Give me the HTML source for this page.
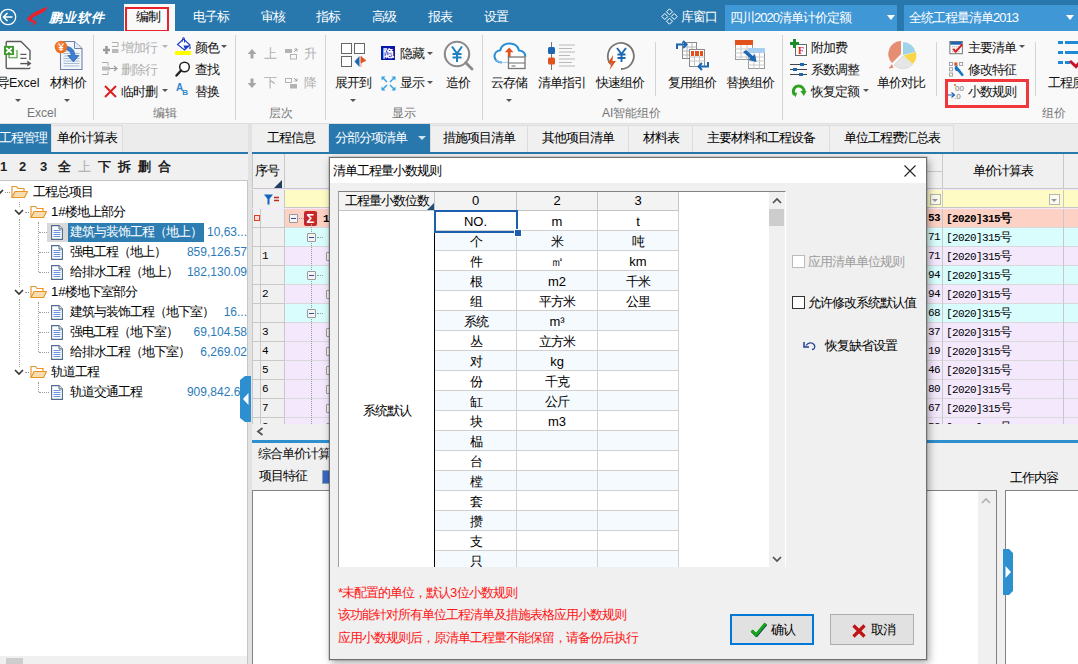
<!DOCTYPE html>
<html lang="zh">
<head>
<meta charset="utf-8">
<title>清单工程量小数规则</title>
<style>
*{box-sizing:border-box;margin:0;padding:0}
html,body{width:1078px;height:664px;overflow:hidden;background:#f0f0f0;font-family:"Liberation Sans",sans-serif;font-size:12px;color:#000}
.abs{position:absolute}
#app{position:relative;width:1078px;height:664px;overflow:hidden;background:#f0f0f0}
/* title bar */
#titlebar{position:absolute;left:0;top:0;width:1078px;height:31px;background:#2878ae}
#titlebar .m{position:absolute;top:8px;color:#fff;letter-spacing:-1px;font-size:13px;line-height:18px;white-space:nowrap}
#tabsel{position:absolute;left:124px;top:4px;width:51px;height:27px;background:#f9f9f9}
#tabred{position:absolute;left:125px;top:7px;width:44px;height:25px;border:2px solid #e8212b}
.combo{position:absolute;top:5px;height:26px;background:#3f97d6;color:#fff;font-size:13px;letter-spacing:-1px;line-height:25px;padding-left:5px;white-space:nowrap;overflow:hidden}
/* ribbon */
#ribbon{position:absolute;left:0;top:31px;width:1078px;height:93px;background:#f9f9f9;border-bottom:1px solid #dedede}
.rsep{position:absolute;top:4px;width:1px;height:85px;background:#d4d4d4}
.rt{position:absolute;letter-spacing:-1px;font-size:13px;line-height:16px;white-space:nowrap;color:#111}
.rt.dis{color:#b0b0b0}
.glabel{position:absolute;top:74px;font-size:12px;line-height:16px;color:#767676;white-space:nowrap}
.dda{position:absolute;width:0;height:0;border-left:3px solid transparent;border-right:3px solid transparent;border-top:3px solid #555}
.dda.l{border-top-color:#b5b5b5}
.dd{display:inline-block;width:0;height:0;border-left:3px solid transparent;border-right:3px solid transparent;border-top:3px solid #555;vertical-align:middle;margin-left:3px}

/* tabs */
.tab{position:absolute;top:125px;height:27px;line-height:23px;font-size:13px;letter-spacing:-1px;text-align:center;white-space:nowrap;background:#f0f0f0;border:1px solid #dcdcdc;border-bottom:none;color:#000}
.tab.sel{background:#2878ae;color:#fff;border-color:#2878ae;top:124px;height:28px;line-height:25px}
.bline{position:absolute;height:2px;background:#2878ae}
/* left tree */
#left{position:absolute;left:0;top:154px;width:248px;height:27px;background:#f0f0f0;border-bottom:1px solid #c6c6c6}
#leftw{position:absolute;left:0;top:181px;width:248px;height:483px;background:#fff;border-right:1px solid #c6c6c6}
.tr{position:absolute;left:0;width:248px;height:20px;line-height:20px;font-size:13px;letter-spacing:-1px;white-space:nowrap}
.tr .amt{position:absolute;right:1px;top:0;color:#2b7bb9;font-size:12px;letter-spacing:0}
.tr .tx{position:absolute;top:0}
.ic{position:absolute}
.vdot{position:absolute;width:0;border-left:1px dotted #9a9a9a}
.hdot{position:absolute;height:0;border-top:1px dotted #9a9a9a}
/* grid */
#grid{position:absolute;left:252px;top:154px;width:826px;height:270px;background:#f4e8fd;overflow:hidden}
.gr{position:absolute;left:0;width:826px;height:19px;border-bottom:1px solid #d9d9d9}
.gc{position:absolute;top:0;height:19px;border-right:1px solid #c8c8c8}
.mono{font-family:"Liberation Mono",monospace;font-size:11px;line-height:18px;white-space:nowrap;position:absolute;letter-spacing:-.6px}

/* dialog */
#dlg{position:absolute;left:329px;top:157px;width:598px;height:503px;background:#f0f0f0;border:1px solid #6f6f6f;box-shadow:0 0 0 1px rgba(0,0,0,.10),2px 3px 8px rgba(0,0,0,.35)}
#dlg .title{position:absolute;left:0;top:0;width:596px;height:25px;background:#fff;font-size:13px;letter-spacing:-1px;line-height:25px;padding-left:3px}
#dg{position:absolute;left:8px;top:33px;width:448px;height:376px;background:#fff;border:1px solid #a0a0a0;border-top-color:#828282;border-right-color:#fff;border-bottom:none;overflow:hidden}
.dh{position:absolute;top:0;height:19px;background:#f3f3f3;border-right:1px solid #c4c4c4;border-bottom:1px solid #c4c4c4;text-align:center;font-size:13px;letter-spacing:-1px;line-height:18px;white-space:nowrap}
.dc{position:absolute;height:20px;border-right:1px solid #d0d0d0;border-bottom:1px solid #d0d0d0;text-align:center;font-size:13px;letter-spacing:-1px;line-height:21px;white-space:nowrap}
.red{position:absolute;left:8px;color:#ff1515;font-size:13px;letter-spacing:-1px;line-height:16px;white-space:nowrap}
.btn{position:absolute;top:456px;width:83px;height:31px;background:#e1e1e1;border:1px solid #adadad;font-size:13px;letter-spacing:-1px;line-height:29px}
.cb{position:absolute;width:13px;height:13px;background:#fff;border:1px solid #333}
</style>
</head>
<body>
<div id="app">

<!-- TITLE BAR -->
<div id="titlebar">
  <svg class="abs" style="left:-1px;top:8px" width="18" height="18" viewBox="0 0 18 18"><circle cx="9" cy="9" r="7.700" fill="none" stroke="#fff" stroke-width="1.300"/><path d="M13.500 9H5M8.500 5L4.500 9l4 4" fill="none" stroke="#fff" stroke-width="1.600"/></svg>
  <svg class="abs" style="left:25px;top:6px" width="24" height="20" viewBox="0 0 24 20"><path d="M23 .8C17.500 2.200 9 6 4 10.500c-2.500 2.300-2.200 4 .3 4.800l4.200 1.200c.8.300.5 1-.5 1.300l-3.500 1c3.500.2 6.500-.5 7-2 .4-1.200-1-2-3.500-2.800C6.500 13.500 6.500 12.500 8 11.500c2.500-1.800 6-3 9-4.500 2.500-1.500 4.500-3.800 6-6.200z" fill="#e8212b"/></svg>
  <div class="m" style="left:49px;top:8px;font-size:13px;font-style:italic;font-weight:bold;letter-spacing:1px;line-height:20px">鹏业软件</div>
  <div id="tabsel"></div>
  <div id="tabred"></div>
  <div class="m" style="left:136px;color:#000">编制</div>
  <div class="m" style="left:193px">电子标</div>
  <div class="m" style="left:261px">审核</div>
  <div class="m" style="left:316px">指标</div>
  <div class="m" style="left:372px">高级</div>
  <div class="m" style="left:428px">报表</div>
  <div class="m" style="left:484px">设置</div>
  <svg class="abs" style="left:661px;top:8px" width="17" height="17" viewBox="0 0 17 17"><g fill="none" stroke="#fff" stroke-width="1"><path d="M8.500 .8l3 3-3 3-3-3zM8.500 10.200l3 3-3 3-3-3zM3.800 5.500l3 3-3 3-3-3zM13.200 5.500l3 3-3 3-3-3z"/></g></svg>
  <div class="m" style="left:681px">库窗口</div>
  <div class="combo" style="left:725px;width:172px">四川2020清单计价定额<span class="dda" style="left:162px;top:10px;border-top-color:#fff;border-left-width:4px;border-right-width:4px;border-top-width:5px"></span></div>
  <div class="combo" style="left:904px;width:174px">全统工程量清单2013<span class="dda" style="left:162px;top:10px;border-top-color:#fff;border-left-width:4px;border-right-width:4px;border-top-width:5px"></span></div>
</div>

<!-- RIBBON -->
<div id="ribbon">
  <!-- group: Excel -->
  <svg class="abs" style="left:3px;top:9px" width="30" height="30" viewBox="0 0 30 30"><path d="M4.200 1.500H18L27 10.500V27.500Q27 28.500 26 28.500H4.200Q3.200 28.500 3.200 27.500V2.500Q3.200 1.500 4.200 1.500Z" fill="#fdfdfd" stroke="#5c5c5c" stroke-width="1.400"/><path d="M17.300 14.300h6.200M17.300 18.300h6.200" stroke="#5c5c5c" stroke-width="1.200"/><path d="M14 10v7.700H6V15" fill="none" stroke="#3c9a2a" stroke-width="1.100"/><rect x="1" y="5.900" width="10" height="9.100" fill="#3c9a2a"/><path d="M3.200 8l5.600 5M8.800 8l-5.600 5" stroke="#fff" stroke-width="1.700"/><rect x="22" y="20" width="8" height="7.500" fill="#f9f9f9"/><path d="M17.300 23.600h7.500" stroke="#555" stroke-width="1.400"/><path d="M24.300 20.600l4.200 3-4.200 3z" fill="#555"/></svg>
  <div class="rt" style="left:-3px;top:44px;font-size:13px;letter-spacing:-1px">导<span style="letter-spacing:0;font-size:12.500px">Excel</span></div>
  <span class="dda" style="left:15px;top:68px"></span>
  <svg class="abs" style="left:54px;top:9px" width="30" height="31" viewBox="0 0 30 31"><path d="M6.500 1.500H20.500L28 8.500V29.500H6.500Z" fill="#f3f7fc" stroke="#6f83a6" stroke-width="1.100"/><path d="M20.500 1.500V8.500H28" fill="#e3ebf5" stroke="#6f83a6" stroke-width="1"/><path d="M9.500 11h10M9.500 13.500h16M9.500 16h16M9.500 18.500h16M9.500 21h16M9.500 23.500h16M9.500 26h16" stroke="#a9bad2" stroke-width="1"/><path d="M12 6.500c5.500 0 8.500 3.500 9 9h3.800l-5.400 6.400-5.600-6.400h3.500c-.4-3.500-2.300-5.500-5.300-6z" fill="#3b7fd4" stroke="#2a5fa8" stroke-width=".7"/><circle cx="7" cy="7" r="6.300" fill="#ee7023"/><circle cx="6" cy="5.500" r="3.500" fill="#f7965a" opacity=".6"/><path d="M4.500 3.500l2.500 3.500 2.500-3.500M7 7v4M4.800 7.500h4.400M4.800 9.300h4.400" stroke="#fff" stroke-width="1.100" fill="none"/></svg>
  <div class="rt" style="left:50px;top:44px;font-size:13px;letter-spacing:-1px">材料价</div>
  <span class="dda" style="left:64px;top:68px"></span>
  <div class="glabel" style="left:27px">Excel</div>
  <div class="rsep" style="left:93px"></div>

  <!-- group: 编辑 -->
  <svg class="abs" style="left:103px;top:10px" width="16" height="14" viewBox="0 0 16 14"><path d="M3.500 5v8M0 9h7" stroke="#9a9a9a" stroke-width="2.600"/><rect x="9" y="8" width="6.500" height="4" fill="#b9b9b9"/><path d="M9 1.500h6v4h-6" fill="none" stroke="#b0b0b0" stroke-width="1"/></svg>
  <div class="rt dis" style="left:121px;top:9px">增加行</div><span class="dda l" style="left:162px;top:14px"></span>
  <svg class="abs" style="left:101px;top:30px" width="17" height="15" viewBox="0 0 17 15"><path d="M1 1.500h6v3M1 13.500h6v-3" fill="none" stroke="#a8a8a8" stroke-width="1"/><rect x="1" y="5.500" width="8" height="4" fill="#bdbdbd"/><path d="M9 7.500h6M13 5l3 2.500-3 2.500" fill="none" stroke="#9a9a9a" stroke-width="1.200"/></svg>
  <div class="rt dis" style="left:121px;top:31px">删除行</div>
  <svg class="abs" style="left:104px;top:54px" width="13" height="13" viewBox="0 0 13 13"><path d="M1 1l11 11M12 1L1 12" stroke="#e01e1e" stroke-width="2"/></svg>
  <div class="rt" style="left:121px;top:53px">临时删</div><span class="dda" style="left:162px;top:58px"></span>
  <svg class="abs" style="left:175px;top:6px" width="17" height="18" viewBox="0 0 17 18"><path d="M2.500 7.500l6-5.500 6.500 6-5.500 5z" fill="#fff" stroke="#1c3cc4" stroke-width="1.100"/><path d="M8.500 8.500l6 .0-4.500 4z" fill="#1c3cc4"/><path d="M7.500 4.500V1.500c0-1.200 2-1.200 2 0v4" fill="none" stroke="#1c3cc4" stroke-width="1"/><path d="M15 8.500c.8 1.500 1 2.500.5 3.200s-1.500.3-1.300-.7z" fill="#1c3cc4"/><rect x="0" y="14" width="16" height="4" fill="#ffff00"/></svg>
  <div class="rt" style="left:195px;top:9px">颜色</div><span class="dda" style="left:221px;top:14px"></span>
  <svg class="abs" style="left:175px;top:30px" width="16" height="16" viewBox="0 0 16 16"><circle cx="9.500" cy="6" r="4.800" fill="#fff" stroke="#222" stroke-width="1.500"/><path d="M6 9.500L1.500 14.500" stroke="#222" stroke-width="2.400" stroke-linecap="round"/></svg>
  <div class="rt" style="left:195px;top:31px">查找</div>
  <div class="abs" style="left:176px;top:52px;font-size:10px;color:#2f86d0;line-height:10px;font-weight:bold">A<span style="font-size:8px;position:relative;top:4px;left:-1px">B</span></div>
  <div class="rt" style="left:195px;top:53px">替换</div>
  <div class="glabel" style="left:153px">编辑</div>
  <div class="rsep" style="left:235px"></div>

  <!-- group: 层次 -->
  <svg class="abs" style="left:247px;top:18px" width="10" height="10" viewBox="0 0 10 10"><path d="M5 0l4.500 5H6.500v4.500h-3V5H.5z" fill="#a6a6a6"/></svg>
  <div class="rt dis" style="left:264px;top:15px">上</div>
  <svg class="abs" style="left:285px;top:17px" width="14" height="12" viewBox="0 0 14 12"><rect x="0" y="1" width="7" height="4" fill="#b3b3b3"/><rect x="5.500" y="6.500" width="6" height="4.500" fill="none" stroke="#b3b3b3"/><path d="M9 4l3-3M9.500 1H12v2.500" fill="none" stroke="#a0a0a0"/></svg>
  <div class="rt dis" style="left:304px;top:15px">升</div>
  <svg class="abs" style="left:247px;top:47px" width="10" height="10" viewBox="0 0 10 10"><path d="M5 10L.5 5h3V.5h3V5h3z" fill="#a6a6a6"/></svg>
  <div class="rt dis" style="left:264px;top:44px">下</div>
  <svg class="abs" style="left:285px;top:46px" width="14" height="12" viewBox="0 0 14 12"><rect x=".5" y="1.500" width="6" height="4" fill="none" stroke="#b3b3b3"/><rect x="5" y="7" width="7" height="4.500" fill="#b3b3b3"/><path d="M9 1l3 3M12 1.500V4H9.500" fill="none" stroke="#a0a0a0"/></svg>
  <div class="rt dis" style="left:304px;top:44px">降</div>
  <div class="glabel" style="left:269px">层次</div>
  <div class="rsep" style="left:325px"></div>

  <!-- group: 显示 -->
  <svg class="abs" style="left:341px;top:12px" width="26" height="26" viewBox="0 0 26 26"><rect x=".5" y=".5" width="10" height="10" fill="#fff" stroke="#666"/><rect x="13.500" y=".5" width="10" height="10" fill="#fff" stroke="#666"/><rect x=".5" y="13.500" width="10" height="10" fill="#fff" stroke="#666"/><path d="M18.500 13v11l-5-5.500z" fill="#1b67b3"/><path d="M20 13v11M20 13.500l5 4-5 2.500z" fill="#e2521d" stroke="#e2521d" stroke-width=".6"/></svg>
  <div class="rt" style="left:335px;top:44px;font-size:13px;letter-spacing:-1px">展开到</div>
  <span class="dda" style="left:350px;top:68px"></span>
  <div class="abs" style="left:381px;top:15px;width:14px;height:14px;background:#0a16a8;color:#fff;font-size:11px;line-height:14px;text-align:center;font-weight:bold;overflow:hidden">隐</div>
  <div class="rt" style="left:400px;top:15px">隐藏</div><span class="dda" style="left:427px;top:21px"></span>
  <svg class="abs" style="left:381px;top:45px" width="15" height="15" viewBox="0 0 15 15"><g stroke="#35a0e2" stroke-width="1.500" fill="#35a0e2"><path d="M2 2l4 4M13 2l-4 4M2 13l4-4M13 13l-4-4" fill="none"/><path d="M.5 .5h4l-4 4zM14.500 .5h-4l4 4zM.5 14.500h4l-4-4zM14.500 14.500h-4l4-4z" stroke="none"/></g></svg>
  <div class="rt" style="left:400px;top:44px">显示</div><span class="dda" style="left:427px;top:50px"></span>
  <svg class="abs" style="left:443px;top:9px" width="31" height="31" viewBox="0 0 31 31"><circle cx="14" cy="14" r="12.200" fill="#fcfcfc" stroke="#8a8a8a" stroke-width="2.100"/><path d="M22.800 22.800l6.200 6.200" stroke="#8a8a8a" stroke-width="2.800" stroke-linecap="round"/><path d="M9 6.500l5 7 5-7M14 13.500v8.500M9.500 14h9M9.500 17.500h9" fill="none" stroke="#1d80c0" stroke-width="2"/></svg>
  <div class="rt" style="left:446px;top:44px;font-size:13px;letter-spacing:-1px">造价</div>
  <div class="glabel" style="left:392px">显示</div>
  <div class="rsep" style="left:482px"></div>

  <!-- group: AI智能组价 -->
  <svg class="abs" style="left:493px;top:11px" width="34" height="28" viewBox="0 0 34 28"><path d="M9 20.500c-4.500 0-7.500-2.800-7.500-6.200 0-3.300 2.500-5.700 5.800-6.100C8.300 4 12 1.500 16.500 1.500c4.800 0 8.500 2.800 9.500 7 3.800.4 6.300 2.800 6.300 6.200" fill="#fff" stroke="#2b8fd3" stroke-width="2.100"/><path d="M3 18c2 2 4 2.500 12 2.500" fill="none" stroke="#9fcdee" stroke-width="1"/><path d="M16.200 5.500l4.300 4.700h-2.900v6h-2.800v-6h-2.900z" fill="#e2521d"/><rect x="15.500" y="15" width="16.500" height="11.500" fill="#fff" stroke="#777" stroke-width="1.300"/><path d="M15.500 21h16.500" stroke="#777" stroke-width="1.100"/><path d="M18.500 24h4" stroke="#777" stroke-width="1.100"/></svg>
  <div class="rt" style="left:491px;top:44px;font-size:13px;letter-spacing:-1px">云存储</div>
  <span class="dda" style="left:506px;top:68px"></span>
  <svg class="abs" style="left:547px;top:11px" width="30" height="28" viewBox="0 0 30 28"><path d="M4.500 0v28" stroke="#777" stroke-width="1"/><rect x="1" y="5" width="7" height="7" rx="1.500" fill="#1b67b3"/><rect x="1" y="15.500" width="7" height="7" rx="1.500" fill="#e2521d"/><path d="M12 3h16M12 6.500h13M12 10h16M12 13.500h11M12 17h16M12 20.500h13M12 24h16" stroke="#b9b9b9" stroke-width="1"/></svg>
  <div class="rt" style="left:538px;top:44px;font-size:13px;letter-spacing:-1px">清单指引</div>
  <svg class="abs" style="left:605px;top:9px" width="31" height="31" viewBox="0 0 31 31"><path d="M6 24.500A13 13 0 1 1 16 29" fill="#fff" stroke="#777" stroke-width="1.800"/><path d="M12 8l4.500 6 4.500-6M16.500 14v8M12.500 14.500h8M12.500 18h8" fill="none" stroke="#1b67b3" stroke-width="1.900"/><path d="M8 15l-5 8h3.500l-2 7 6.500-9H7.500z" fill="#e2521d"/></svg>
  <div class="rt" style="left:596px;top:44px;font-size:13px;letter-spacing:-1px">快速组价</div>
  <span class="dda" style="left:617px;top:68px"></span>
  <div class="rsep" style="left:655px;top:11px;height:54px"></div>
  <svg class="abs" style="left:676px;top:9px" width="33" height="32" viewBox="0 0 33 32"><rect x="6.500" y="2.500" width="14" height="16" fill="#fff" stroke="#888"/><path d="M6.500 7h14M6.500 11h14M6.500 15h14M11 2.500v16M16 2.500v16" stroke="#b5b5b5" stroke-width="1"/><rect x="13.500" y="9.500" width="15" height="17" fill="#fff" stroke="#888"/><rect x="15" y="11" width="12" height="5" fill="#e2521d"/><path d="M13.500 17h15M13.500 21h15M18.500 11v15.500M23.500 11v15.500" stroke="#c5c5c5" stroke-width="1"/><path d="M18.500 11v5M23.500 11v5" stroke="#fff"/><path d="M1 9V4.500h9M7 1l3.500 3.500L7 8" fill="none" stroke="#1b67b3" stroke-width="2"/><path d="M32 22v4.500h-9M26 23l-3.500 3.500L26 30" fill="none" stroke="#1b67b3" stroke-width="2"/></svg>
  <div class="rt" style="left:668px;top:44px;font-size:13px;letter-spacing:-1px">复用组价</div>
  <svg class="abs" style="left:734px;top:8px" width="33" height="33" viewBox="0 0 33 33"><rect x="1.500" y="1.500" width="17" height="19" fill="#fff" stroke="#999"/><rect x="1" y="1" width="18" height="5" fill="#e2521d"/><path d="M1.500 10h17M1.500 14h17M1.500 18h17M7 6v14.500M13 6v14.500" stroke="#c9c9c9"/><rect x="14.500" y="9.500" width="16" height="20" fill="#fff" stroke="#999"/><rect x="14" y="9" width="17" height="5" fill="#a9d0f0"/><path d="M14.500 18h16M14.500 22h16M14.500 26h16M20 14v15.500M25.500 14v15.500" stroke="#c9c9c9"/><path d="M9 13l7 6-1.500 2 8 2-1.500-8-2 2-7-6z" fill="#1b67b3"/></svg>
  <div class="rt" style="left:726px;top:44px;font-size:13px;letter-spacing:-1px">替换组价</div>
  <div class="glabel" style="left:602px">AI智能组价</div>
  <div class="rsep" style="left:782px"></div>

  <!-- group: 组价 -->
  <svg class="abs" style="left:790px;top:8px" width="18" height="18" viewBox="0 0 18 18"><rect x="5.500" y="5.500" width="11" height="11" fill="#fff" stroke="#666"/><text x="8" y="15" font-family="Liberation Serif" font-weight="bold" font-size="10" fill="#e01e1e">F</text><path d="M4.500 0v9M0 4.500h9" stroke="#1e8a2e" stroke-width="3"/></svg>
  <div class="rt" style="left:811px;top:9px">附加费</div>
  <svg class="abs" style="left:790px;top:31px" width="18" height="15" viewBox="0 0 18 15"><path d="M0 2.500h17M0 7.500h17M0 12.500h17" stroke="#444" stroke-width="1"/><rect x="10" y="1" width="4" height="3" fill="#1b67b3"/><rect x="3" y="6" width="4" height="3" fill="#1b67b3"/><rect x="9" y="11" width="4" height="3" fill="#1b67b3"/></svg>
  <div class="rt" style="left:811px;top:31px">系数调整</div>
  <svg class="abs" style="left:791px;top:53px" width="16" height="15" viewBox="0 0 17 17"><path d="M3.500 12A6 6 0 1 1 14 9.500" fill="none" stroke="#2ea31f" stroke-width="3.400"/><path d="M10 8h7l-3 5.500z" fill="#2ea31f"/><path d="M1 10l3.500 5 2-5z" fill="#2ea31f"/></svg>
  <div class="rt" style="left:811px;top:53px">恢复定额</div><span class="dda" style="left:863px;top:58px"></span>
  <svg class="abs" style="left:886px;top:9px" width="32" height="32" viewBox="0 0 32 32"><path d="M17 15L17 2A13 13 0 0 1 29.500 12z" fill="#9fd3ea"/><path d="M17.500 15.500l12.500-3.500a13 13 0 0 1-3 12z" fill="#f8d648"/><path d="M17 16l9.500 8.500A13 13 0 0 1 8 25z" fill="#e6e6e6" stroke="#c8c8c8" stroke-width=".5"/><path d="M15 14L15 1A13 13 0 0 0 6 23z" fill="#e58e73"/><path d="M6 24l-3.500 4.500 5-.5z" fill="#e58e73"/></svg>
  <div class="rt" style="left:877px;top:44px;font-size:13px;letter-spacing:-1px">单价对比</div>
  <div class="rsep" style="left:936px;top:11px;height:54px"></div>
  <svg class="abs" style="left:949px;top:10px" width="15" height="14" viewBox="0 0 17 17"><rect x=".5" y=".5" width="15" height="15" fill="#fff" stroke="#555"/><rect x="1" y="1" width="14" height="3.500" fill="#1b67b3"/><path d="M3 7h9M3 10h9M3 13h9" stroke="#999" stroke-dasharray="1.500 1"/><path d="M4.500 9.500l3 3.500 8-9" fill="none" stroke="#e01e1e" stroke-width="2.400"/></svg>
  <div class="rt" style="left:968px;top:9px">主要清单</div><span class="dda" style="left:1019px;top:14px"></span>
  <svg class="abs" style="left:949px;top:31px" width="15" height="15" viewBox="0 0 17 17"><g fill="none" stroke="#999"><rect x=".5" y=".5" width="3.500" height="3.500"/><rect x=".5" y="6.500" width="3.500" height="3.500"/><rect x=".5" y="12.500" width="3.500" height="3.500"/><rect x="12" y=".5" width="3.500" height="3.500"/></g><rect x="6" y=".5" width="3.500" height="3.500" fill="#e2521d"/><path d="M9 7l6 7.500" stroke="#1b76c0" stroke-width="3" stroke-linecap="round"/><path d="M9.500 3.500a3.500 3.500 0 1 0 3.500 5l-2.500 0-1-2z" fill="#1b76c0"/></svg>
  <div class="rt" style="left:968px;top:31px">修改特征</div>
  <svg class="abs" style="left:948px;top:52px" width="18" height="17" viewBox="0 0 18 17"><text x="7" y="7.500" font-family="Liberation Sans" font-size="8" fill="#777">00</text><text x="6" y="16" font-family="Liberation Sans" font-size="8" fill="#777">.0</text><circle cx="7" cy="2" r=".9" fill="#e2521d"/><path d="M0 12h6M3.500 9.500L6.500 12l-3 2.500" fill="none" stroke="#1b67b3" stroke-width="1.200"/></svg>
  <div class="rt" style="left:968px;top:53px">小数规则</div>
  <div class="abs" style="left:945px;top:48px;width:84px;height:29px;border:3px solid #f0383c"></div>
  <div class="rsep" style="left:1035px;top:11px;height:54px"></div>
  <svg class="abs" style="left:1057px;top:9px" width="21" height="30" viewBox="0 0 21 30"><path d="M1 2.500h5M8 2.500h13M1 12.500h5M8 12.500h13M1 22.500h5M8 22.500h5" stroke="#1e8ad6" stroke-width="3"/><path d="M13 21l6 5.500 4-4.500" fill="none" stroke="#c8102a" stroke-width="3"/></svg>
  <div class="rt" style="left:1048px;top:44px;font-size:13px;letter-spacing:-1px">工程质</div>
  <div class="glabel" style="left:1042px">组价</div>
</div>

<!-- TAB STRIPS -->
<div class="abs" style="left:0;top:124px;width:1078px;height:28px;background:#ececec"></div>
<div class="tab sel" style="left:-5px;width:56px">工程管理</div>
<div class="tab" style="left:51px;width:72px">单价计算表</div>
<div class="bline" style="left:0;top:152px;width:248px"></div>
<div class="abs" style="left:248px;top:124px;width:4px;height:540px;background:#e2e2e2"></div>

<div class="tab" style="left:252px;width:77px;border-color:#f0f0f0;border-right-color:#dcdcdc">工程信息</div>
<div class="tab sel" style="left:329px;width:101px;text-align:left;padding-left:5px">分部分项清单</div>
<span class="dda" style="left:418px;top:136px;border-top-color:#cfe3f2;border-left-width:4px;border-right-width:4px;border-top-width:4px"></span>
<div class="tab" style="left:430px;width:98px">措施项目清单</div>
<div class="tab" style="left:527px;width:102px">其他项目清单</div>
<div class="tab" style="left:628px;width:65px">材料表</div>
<div class="tab" style="left:692px;width:138px">主要材料和工程设备</div>
<div class="tab" style="left:829px;width:125px">单位工程费汇总表</div>
<div class="bline" style="left:252px;top:152px;width:826px"></div>

<!-- LEFT PANEL -->
<div id="left">
  <div class="abs" style="left:0;top:4px;font-size:13px;font-weight:bold;white-space:nowrap;line-height:18px;color:#222">
    <span class="abs" style="left:0px">1</span><span class="abs" style="left:19px">2</span><span class="abs" style="left:40px">3</span><span class="abs" style="left:58px">全</span><span class="abs" style="left:78px;color:#aaa;font-weight:normal">上</span><span class="abs" style="left:98px">下</span><span class="abs" style="left:118px">拆</span><span class="abs" style="left:138px">删</span><span class="abs" style="left:158px">合</span>
  </div>
</div>
<div id="leftw"></div>
<div id="tree" class="abs" style="left:0;top:0;width:248px;height:664px;overflow:hidden">
<div class="tr" style="top:182px"><svg class="ic" style="left:-6px;top:7px" width="10" height="7" viewBox="0 0 10 7"><path d="M1 1l4 4 4-4" fill="none" stroke="#333" stroke-width="1.600"/></svg><span class="hdot" style="left:5px;top:10px;width:5px"></span><svg class="ic" style="left:11px;top:3px" width="17" height="14" viewBox="0 0 17 14"><path d="M1 12.500V1.500h4.500l1.500 2H13v3" fill="#fff" stroke="#e8962a" stroke-width="1.200"/><path d="M1 12.500l3-6h12.500l-3 6z" fill="#f7dcae" stroke="#e8962a" stroke-width="1.200"/></svg><span class="tx" style="left:33px">工程总项目</span></div>
<div class="tr" style="top:202px"><svg class="ic" style="left:14px;top:7px" width="10" height="7" viewBox="0 0 10 7"><path d="M1 1l4 4 4-4" fill="none" stroke="#333" stroke-width="1.600"/></svg><span class="hdot" style="left:25px;top:10px;width:4px"></span><svg class="ic" style="left:30px;top:3px" width="17" height="14" viewBox="0 0 17 14"><path d="M1 12.500V1.500h4.500l1.500 2H13v3" fill="#fff" stroke="#e8962a" stroke-width="1.200"/><path d="M1 12.500l3-6h12.500l-3 6z" fill="#f7dcae" stroke="#e8962a" stroke-width="1.200"/></svg><span class="tx" style="left:51px"><span style="letter-spacing:0">1#</span>楼地上部分</span></div>
<div class="tr" style="top:222px"><span class="hdot" style="left:39px;top:10px;width:10px"></span><span class="abs" style="left:47px;top:1px;width:21px;height:19px;background:#d9d9d9"></span><svg class="ic" style="left:51px;top:3px" width="12" height="15" viewBox="0 0 12 15"><path d="M.6 .6h7.400l3.400 3.400v10.400H.6z" fill="#fff" stroke="#4f6b8c" stroke-width="1.100"/><path d="M8 .6v3.400h3.400" fill="#dfe7f1" stroke="#4f6b8c" stroke-width="1"/><path d="M2.500 5.500h7M2.500 7.500h7M2.500 9.500h7M2.500 11.500h7" stroke="#6a94dc" stroke-width="1"/></svg><span class="tx" style="left:68px;top:1px;height:19px;line-height:18px;width:136px;background:#2d7db3;color:#fff;padding-left:2px">建筑与装饰工程（地上）</span><span class="amt">10,63...</span></div>
<div class="tr" style="top:242px"><span class="hdot" style="left:39px;top:10px;width:10px"></span><svg class="ic" style="left:51px;top:3px" width="12" height="15" viewBox="0 0 12 15"><path d="M.6 .6h7.400l3.400 3.400v10.400H.6z" fill="#fff" stroke="#4f6b8c" stroke-width="1.100"/><path d="M8 .6v3.400h3.400" fill="#dfe7f1" stroke="#4f6b8c" stroke-width="1"/><path d="M2.500 5.500h7M2.500 7.500h7M2.500 9.500h7M2.500 11.500h7" stroke="#6a94dc" stroke-width="1"/></svg><span class="tx" style="left:70px">强电工程（地上）</span><span class="amt">859,126.57</span></div>
<div class="tr" style="top:262px"><span class="hdot" style="left:39px;top:10px;width:10px"></span><svg class="ic" style="left:51px;top:3px" width="12" height="15" viewBox="0 0 12 15"><path d="M.6 .6h7.400l3.400 3.400v10.400H.6z" fill="#fff" stroke="#4f6b8c" stroke-width="1.100"/><path d="M8 .6v3.400h3.400" fill="#dfe7f1" stroke="#4f6b8c" stroke-width="1"/><path d="M2.500 5.500h7M2.500 7.500h7M2.500 9.500h7M2.500 11.500h7" stroke="#6a94dc" stroke-width="1"/></svg><span class="tx" style="left:70px">给排水工程（地上）</span><span class="amt">182,130.09</span></div>
<div class="tr" style="top:282px"><svg class="ic" style="left:14px;top:7px" width="10" height="7" viewBox="0 0 10 7"><path d="M1 1l4 4 4-4" fill="none" stroke="#333" stroke-width="1.600"/></svg><span class="hdot" style="left:25px;top:10px;width:4px"></span><svg class="ic" style="left:30px;top:3px" width="17" height="14" viewBox="0 0 17 14"><path d="M1 12.500V1.500h4.500l1.500 2H13v3" fill="#fff" stroke="#e8962a" stroke-width="1.200"/><path d="M1 12.500l3-6h12.500l-3 6z" fill="#f7dcae" stroke="#e8962a" stroke-width="1.200"/></svg><span class="tx" style="left:51px"><span style="letter-spacing:0">1#</span>楼地下室部分</span></div>
<div class="tr" style="top:302px"><span class="hdot" style="left:39px;top:10px;width:10px"></span><svg class="ic" style="left:51px;top:3px" width="12" height="15" viewBox="0 0 12 15"><path d="M.6 .6h7.400l3.400 3.400v10.400H.6z" fill="#fff" stroke="#4f6b8c" stroke-width="1.100"/><path d="M8 .6v3.400h3.400" fill="#dfe7f1" stroke="#4f6b8c" stroke-width="1"/><path d="M2.500 5.500h7M2.500 7.500h7M2.500 9.500h7M2.500 11.500h7" stroke="#6a94dc" stroke-width="1"/></svg><span class="tx" style="left:70px">建筑与装饰工程（地下室）</span><span class="amt">16...</span></div>
<div class="tr" style="top:322px"><span class="hdot" style="left:39px;top:10px;width:10px"></span><svg class="ic" style="left:51px;top:3px" width="12" height="15" viewBox="0 0 12 15"><path d="M.6 .6h7.400l3.400 3.400v10.400H.6z" fill="#fff" stroke="#4f6b8c" stroke-width="1.100"/><path d="M8 .6v3.400h3.400" fill="#dfe7f1" stroke="#4f6b8c" stroke-width="1"/><path d="M2.500 5.500h7M2.500 7.500h7M2.500 9.500h7M2.500 11.500h7" stroke="#6a94dc" stroke-width="1"/></svg><span class="tx" style="left:70px">强电工程（地下室）</span><span class="amt">69,104.58</span></div>
<div class="tr" style="top:342px"><span class="hdot" style="left:39px;top:10px;width:10px"></span><svg class="ic" style="left:51px;top:3px" width="12" height="15" viewBox="0 0 12 15"><path d="M.6 .6h7.400l3.400 3.400v10.400H.6z" fill="#fff" stroke="#4f6b8c" stroke-width="1.100"/><path d="M8 .6v3.400h3.400" fill="#dfe7f1" stroke="#4f6b8c" stroke-width="1"/><path d="M2.500 5.500h7M2.500 7.500h7M2.500 9.500h7M2.500 11.500h7" stroke="#6a94dc" stroke-width="1"/></svg><span class="tx" style="left:70px">给排水工程（地下室）</span><span class="amt">6,269.02</span></div>
<div class="tr" style="top:362px"><svg class="ic" style="left:14px;top:7px" width="10" height="7" viewBox="0 0 10 7"><path d="M1 1l4 4 4-4" fill="none" stroke="#333" stroke-width="1.600"/></svg><span class="hdot" style="left:25px;top:10px;width:4px"></span><svg class="ic" style="left:30px;top:3px" width="17" height="14" viewBox="0 0 17 14"><path d="M1 12.500V1.500h4.500l1.500 2H13v3" fill="#fff" stroke="#e8962a" stroke-width="1.200"/><path d="M1 12.500l3-6h12.500l-3 6z" fill="#f7dcae" stroke="#e8962a" stroke-width="1.200"/></svg><span class="tx" style="left:51px">轨道工程</span></div>
<div class="tr" style="top:382px"><span class="hdot" style="left:39px;top:10px;width:10px"></span><svg class="ic" style="left:51px;top:3px" width="12" height="15" viewBox="0 0 12 15"><path d="M.6 .6h7.400l3.400 3.400v10.400H.6z" fill="#fff" stroke="#4f6b8c" stroke-width="1.100"/><path d="M8 .6v3.400h3.400" fill="#dfe7f1" stroke="#4f6b8c" stroke-width="1"/><path d="M2.500 5.500h7M2.500 7.500h7M2.500 9.500h7M2.500 11.500h7" stroke="#6a94dc" stroke-width="1"/></svg><span class="tx" style="left:70px">轨道交通工程</span><span class="amt">909,842.61</span></div>
<span class="vdot" style="left:19px;top:202px;height:5px"></span>
<span class="vdot" style="left:19px;top:219px;height:68px"></span>
<span class="vdot" style="left:19px;top:299px;height:68px"></span>
<span class="vdot" style="left:38px;top:222px;height:50px"></span>
<span class="vdot" style="left:38px;top:302px;height:50px"></span>
<span class="vdot" style="left:38px;top:382px;height:10px"></span>
</div>
<!-- left bottom scrollbar -->
<div class="abs" style="left:0;top:656px;width:247px;height:8px;background:#f0f0f0"></div>
<div class="abs" style="left:6px;top:658px;width:17px;height:6px;background:#cdcdcd"></div>
<!-- splitter handle -->
<svg class="abs" style="left:240px;top:376px" width="11" height="46" viewBox="0 0 11 46"><path d="M5 0h6v46H5L0 42V4z" fill="#2e8fd0"/><path d="M8.500 17v12l-5.500-6z" fill="#fff"/></svg>

<!-- main grid -->
<div id="grid">
<div class="abs" style="left:0;top:0;width:826px;height:35px;background:#f0f0f0;border-bottom:1px solid #c8c8c8"></div>
<div class="abs" style="left:0;top:0;width:33px;height:35px;border-right:1px solid #c8c8c8;border-left:1px solid #c8c8c8"></div>
<div class="abs" style="left:3px;top:8px;font-size:13px;letter-spacing:-1px;line-height:18px;white-space:nowrap">序号</div>
<svg class="abs" style="left:22px;top:26px" width="8" height="8"><path d="M8 0v8H0z" fill="#1f4060"/></svg>
<div class="abs" style="left:600px;top:17px;width:90px;height:0;border-top:1px solid #c8c8c8"></div>
<div class="abs" style="left:690px;top:0;width:122px;height:35px;border-left:1px solid #c8c8c8;border-right:1px solid #c8c8c8;text-align:center;line-height:34px;font-size:13px;letter-spacing:-1px">单价计算表</div>
<div class="abs" style="left:0;top:36px;width:826px;height:18px;background:#fffbc5;border-bottom:1px solid #c8c8c8"></div>
<div class="abs" style="left:0;top:36px;width:33px;height:18px;background:#f0f0f0;border-right:1px solid #c8c8c8;border-left:1px solid #c8c8c8"></div>
<svg class="abs" style="left:12px;top:40px" width="16" height="11" viewBox="0 0 16 11"><path d="M0 .5h9L5.500 5v5.500h-2V5z" fill="#1565c0"/><path d="M10 3.500h5M10 6.500h5" stroke="#c0271d" stroke-width="1.600"/></svg>
<div class="abs" style="left:690px;top:36px;width:0;height:18px;border-left:1px solid #c8c8c8"></div><div class="abs" style="left:811px;top:36px;width:0;height:18px;border-left:1px solid #c8c8c8"></div>
<div class="abs" style="left:678px;top:40px;width:11px;height:11px;border:1px solid #b5b5b5;background:#fbfbf0"></div><span class="dda" style="left:680px;top:45px;border-top-color:#999"></span>
<div class="abs" style="left:797px;top:40px;width:11px;height:11px;border:1px solid #b5b5b5;background:#fbfbf0"></div><span class="dda" style="left:799px;top:45px;border-top-color:#999"></span>
<div class="gr" style="top:55px;background:#fdd1c4"><div class="gc" style="left:0;width:33px;background:#f0f0f0;border-left:1px solid #c8c8c8;border-bottom:1px solid #c8c8c8"></div><div class="gc" style="left:0;width:9px"></div><span class="mono" style="left:676px;top:0px;font-weight:bold">53</span><span class="mono" style="left:694px;top:0px;font-weight:bold">[2020]315<span style="font-family:'Liberation Sans',sans-serif;font-size:12px;letter-spacing:0">号</span></span><div class="gc" style="left:690px;width:1px"></div><div class="gc" style="left:811px;width:1px"></div><div class="abs" style="left:37px;top:5px;width:9px;height:9px;border:1px solid #999;background:#f4f4f4;border-radius:1px"></div><div class="abs" style="left:39px;top:9px;width:5px;height:1px;background:#3a4a9a"></div><span class="hdot" style="left:47px;top:9px;width:5px"></span><div class="abs" style="left:52px;top:2px;width:13px;height:15px;background:#c4282a;border-radius:2px;color:#fff;font-weight:bold;font-size:13px;line-height:15px;text-align:center">Σ</div><span class="mono" style="left:71px;top:1px;font-weight:bold">1</span></div>
<div class="gr" style="top:74px;background:#d9fcfd"><div class="gc" style="left:0;width:33px;background:#f0f0f0;border-left:1px solid #c8c8c8;border-bottom:1px solid #c8c8c8"></div><div class="gc" style="left:0;width:9px"></div><span class="mono" style="left:676px;top:0px">71</span><span class="mono" style="left:694px;top:0px">[2020]315<span style="font-family:'Liberation Sans',sans-serif;font-size:12px;letter-spacing:0">号</span></span><div class="gc" style="left:690px;width:1px"></div><div class="gc" style="left:811px;width:1px"></div><div class="abs" style="left:55px;top:5px;width:9px;height:9px;border:1px solid #999;background:#f4f4f4;border-radius:1px;z-index:2"></div><div class="abs" style="left:57px;top:9px;width:5px;height:1px;background:#3a4a9a;z-index:3"></div><span class="hdot" style="left:65px;top:9px;width:6px"></span></div>
<div class="gr" style="top:93px;background:#f4e8fd"><div class="gc" style="left:0;width:33px;background:#f0f0f0;border-left:1px solid #c8c8c8;border-bottom:1px solid #c8c8c8"></div><div class="gc" style="left:0;width:9px"></div><span class="mono" style="left:10px;top:0px">1</span><span class="mono" style="left:676px;top:0px">71</span><span class="mono" style="left:694px;top:0px">[2020]315<span style="font-family:'Liberation Sans',sans-serif;font-size:12px;letter-spacing:0">号</span></span><div class="gc" style="left:690px;width:1px"></div><div class="gc" style="left:811px;width:1px"></div><div class="abs" style="left:74px;top:5px;width:9px;height:9px;border:1px solid #999;background:#f4f4f4;border-radius:1px"></div></div>
<div class="gr" style="top:112px;background:#d9fcfd"><div class="gc" style="left:0;width:33px;background:#f0f0f0;border-left:1px solid #c8c8c8;border-bottom:1px solid #c8c8c8"></div><div class="gc" style="left:0;width:9px"></div><span class="mono" style="left:676px;top:0px">94</span><span class="mono" style="left:694px;top:0px">[2020]315<span style="font-family:'Liberation Sans',sans-serif;font-size:12px;letter-spacing:0">号</span></span><div class="gc" style="left:690px;width:1px"></div><div class="gc" style="left:811px;width:1px"></div><div class="abs" style="left:55px;top:5px;width:9px;height:9px;border:1px solid #999;background:#f4f4f4;border-radius:1px;z-index:2"></div><div class="abs" style="left:57px;top:9px;width:5px;height:1px;background:#3a4a9a;z-index:3"></div><span class="hdot" style="left:65px;top:9px;width:6px"></span></div>
<div class="gr" style="top:131px;background:#f4e8fd"><div class="gc" style="left:0;width:33px;background:#f0f0f0;border-left:1px solid #c8c8c8;border-bottom:1px solid #c8c8c8"></div><div class="gc" style="left:0;width:9px"></div><span class="mono" style="left:10px;top:0px">2</span><span class="mono" style="left:676px;top:0px">94</span><span class="mono" style="left:694px;top:0px">[2020]315<span style="font-family:'Liberation Sans',sans-serif;font-size:12px;letter-spacing:0">号</span></span><div class="gc" style="left:690px;width:1px"></div><div class="gc" style="left:811px;width:1px"></div><div class="abs" style="left:74px;top:5px;width:9px;height:9px;border:1px solid #999;background:#f4f4f4;border-radius:1px"></div></div>
<div class="gr" style="top:150px;background:#d9fcfd"><div class="gc" style="left:0;width:33px;background:#f0f0f0;border-left:1px solid #c8c8c8;border-bottom:1px solid #c8c8c8"></div><div class="gc" style="left:0;width:9px"></div><span class="mono" style="left:676px;top:0px">68</span><span class="mono" style="left:694px;top:0px">[2020]315<span style="font-family:'Liberation Sans',sans-serif;font-size:12px;letter-spacing:0">号</span></span><div class="gc" style="left:690px;width:1px"></div><div class="gc" style="left:811px;width:1px"></div><div class="abs" style="left:55px;top:5px;width:9px;height:9px;border:1px solid #999;background:#f4f4f4;border-radius:1px;z-index:2"></div><div class="abs" style="left:57px;top:9px;width:5px;height:1px;background:#3a4a9a;z-index:3"></div><span class="hdot" style="left:65px;top:9px;width:6px"></span></div>
<div class="gr" style="top:169px;background:#f4e8fd"><div class="gc" style="left:0;width:33px;background:#f0f0f0;border-left:1px solid #c8c8c8;border-bottom:1px solid #c8c8c8"></div><div class="gc" style="left:0;width:9px"></div><span class="mono" style="left:10px;top:0px">3</span><span class="mono" style="left:676px;top:0px">37</span><span class="mono" style="left:694px;top:0px">[2020]315<span style="font-family:'Liberation Sans',sans-serif;font-size:12px;letter-spacing:0">号</span></span><div class="gc" style="left:690px;width:1px"></div><div class="gc" style="left:811px;width:1px"></div><div class="abs" style="left:74px;top:5px;width:9px;height:9px;border:1px solid #999;background:#f4f4f4;border-radius:1px"></div></div>
<div class="gr" style="top:188px;background:#f4e8fd"><div class="gc" style="left:0;width:33px;background:#f0f0f0;border-left:1px solid #c8c8c8;border-bottom:1px solid #c8c8c8"></div><div class="gc" style="left:0;width:9px"></div><span class="mono" style="left:10px;top:0px">4</span><span class="mono" style="left:676px;top:0px">19</span><span class="mono" style="left:694px;top:0px">[2020]315<span style="font-family:'Liberation Sans',sans-serif;font-size:12px;letter-spacing:0">号</span></span><div class="gc" style="left:690px;width:1px"></div><div class="gc" style="left:811px;width:1px"></div><div class="abs" style="left:74px;top:5px;width:9px;height:9px;border:1px solid #999;background:#f4f4f4;border-radius:1px"></div></div>
<div class="gr" style="top:207px;background:#f4e8fd"><div class="gc" style="left:0;width:33px;background:#f0f0f0;border-left:1px solid #c8c8c8;border-bottom:1px solid #c8c8c8"></div><div class="gc" style="left:0;width:9px"></div><span class="mono" style="left:10px;top:0px">5</span><span class="mono" style="left:676px;top:0px">46</span><span class="mono" style="left:694px;top:0px">[2020]315<span style="font-family:'Liberation Sans',sans-serif;font-size:12px;letter-spacing:0">号</span></span><div class="gc" style="left:690px;width:1px"></div><div class="gc" style="left:811px;width:1px"></div><div class="abs" style="left:74px;top:5px;width:9px;height:9px;border:1px solid #999;background:#f4f4f4;border-radius:1px"></div></div>
<div class="gr" style="top:226px;background:#f4e8fd"><div class="gc" style="left:0;width:33px;background:#f0f0f0;border-left:1px solid #c8c8c8;border-bottom:1px solid #c8c8c8"></div><div class="gc" style="left:0;width:9px"></div><span class="mono" style="left:10px;top:0px">6</span><span class="mono" style="left:676px;top:0px">80</span><span class="mono" style="left:694px;top:0px">[2020]315<span style="font-family:'Liberation Sans',sans-serif;font-size:12px;letter-spacing:0">号</span></span><div class="gc" style="left:690px;width:1px"></div><div class="gc" style="left:811px;width:1px"></div><div class="abs" style="left:74px;top:5px;width:9px;height:9px;border:1px solid #999;background:#f4f4f4;border-radius:1px"></div></div>
<div class="gr" style="top:245px;background:#f4e8fd"><div class="gc" style="left:0;width:33px;background:#f0f0f0;border-left:1px solid #c8c8c8;border-bottom:1px solid #c8c8c8"></div><div class="gc" style="left:0;width:9px"></div><span class="mono" style="left:10px;top:0px">7</span><span class="mono" style="left:676px;top:0px">67</span><span class="mono" style="left:694px;top:0px">[2020]315<span style="font-family:'Liberation Sans',sans-serif;font-size:12px;letter-spacing:0">号</span></span><div class="gc" style="left:690px;width:1px"></div><div class="gc" style="left:811px;width:1px"></div><div class="abs" style="left:74px;top:5px;width:9px;height:9px;border:1px solid #999;background:#f4f4f4;border-radius:1px"></div></div>
<div class="gr" style="top:264px;background:#f4e8fd"><div class="gc" style="left:0;width:33px;background:#f0f0f0;border-left:1px solid #c8c8c8;border-bottom:1px solid #c8c8c8"></div><div class="gc" style="left:0;width:9px"></div><span class="mono" style="left:10px;top:0px">8</span><span class="mono" style="left:676px;top:0px">52</span><span class="mono" style="left:694px;top:0px">[2020]315<span style="font-family:'Liberation Sans',sans-serif;font-size:12px;letter-spacing:0">号</span></span><div class="abs" style="left:74px;top:5px;width:9px;height:9px;border:1px solid #999;background:#f4f4f4;border-radius:1px"></div><div class="gc" style="left:690px;width:1px"></div><div class="gc" style="left:811px;width:1px"></div></div>
<span class="vdot" style="left:59px;top:70px;height:200px"></span>
<div class="abs" style="left:2px;top:61px;width:6px;height:6px;border:1px solid #e0401c;background:#fdd"></div>
</div>
<!-- grid h-scroll -->
<div class="abs" style="left:252px;top:424px;width:826px;height:16px;background:#f0f0f0"></div>
<svg class="abs" style="left:256px;top:427px" width="8" height="9" viewBox="0 0 8 9"><path d="M6.500 1L2 4.500 6.500 8" fill="none" stroke="#555" stroke-width="1.800"/></svg>
<div class="bline" style="left:252px;top:440px;width:826px;height:3px;background:#2e8fd0"></div>

<!-- BOTTOM PANEL -->
<div class="abs" style="left:258px;top:445px;font-size:13px;letter-spacing:-1px;line-height:18px;white-space:nowrap;color:#111">综合单价计算</div>
<div class="abs" style="left:259px;top:467px;font-size:13px;letter-spacing:-1px;line-height:18px;white-space:nowrap">项目特征</div>
<div class="abs" style="left:322px;top:470px;width:10px;height:14px;background:#3a66c4;border:1px solid #8aa"></div>
<div class="abs" style="left:252px;top:490px;width:745px;height:180px;background:#fff;border:1px solid #828282"></div>
<div class="abs" style="left:978px;top:491px;width:18px;height:173px;background:#f0f0f0"></div>
<svg class="abs" style="left:981px;top:497px" width="10" height="7" viewBox="0 0 10 7"><path d="M1 6l4-4 4 4" fill="none" stroke="#b0b0b0" stroke-width="1.600"/></svg>
<div class="abs" style="left:1010px;top:469px;font-size:13px;letter-spacing:-1px;line-height:18px;white-space:nowrap">工作内容</div>
<div class="abs" style="left:1005px;top:490px;width:80px;height:180px;background:#fff;border:1px solid #828282"></div>
<svg class="abs" style="left:1003px;top:549px" width="10" height="46" viewBox="0 0 10 46"><path d="M0 0h6l4 4v38l-4 4H0z" fill="#2e8fd0"/><path d="M2.500 17v12l5.500-6z" fill="#fff"/></svg>


<div id="dlg">
  <div class="title">清单工程量小数规则</div>
  <svg class="abs" style="left:574px;top:7px" width="12" height="12" viewBox="0 0 12 12"><path d="M.5.5l11 11M11.500.5L.5 11.500" stroke="#222" stroke-width="1.100"/></svg>
  <div id="dg">
    <div class="dh" style="left:0;width:96px">工程量小数位数</div>
    <svg class="abs" style="left:88px;top:11px" width="7" height="7"><path d="M7 0v7H0z" fill="#1f4e79"/></svg>
    <div class="dh" style="left:96px;width:82px;letter-spacing:0">0</div>
    <div class="dh" style="left:178px;width:81px;letter-spacing:0">2</div>
    <div class="dh" style="left:259px;width:81px;letter-spacing:0">3</div>
    <div class="abs" style="left:24px;top:211px;font-size:13px;letter-spacing:-1px;line-height:16px;white-space:nowrap">系统默认</div>
    <div class="dc" style="left:96px;top:19px;width:82px;background:#fff;letter-spacing:0">NO.</div>
<div class="dc" style="left:178px;top:19px;width:81px;background:#fff;letter-spacing:0">m</div>
<div class="dc" style="left:259px;top:19px;width:81px;background:#fff;letter-spacing:0">t</div>
<div class="dc" style="left:96px;top:39px;width:82px;background:#f5fafe">个</div>
<div class="dc" style="left:178px;top:39px;width:81px;background:#f5fafe">米</div>
<div class="dc" style="left:259px;top:39px;width:81px;background:#f5fafe">吨</div>
<div class="dc" style="left:96px;top:59px;width:82px;background:#fff">件</div>
<div class="dc" style="left:178px;top:59px;width:81px;background:#fff">㎡</div>
<div class="dc" style="left:259px;top:59px;width:81px;background:#fff;letter-spacing:0">km</div>
<div class="dc" style="left:96px;top:79px;width:82px;background:#f5fafe">根</div>
<div class="dc" style="left:178px;top:79px;width:81px;background:#f5fafe;letter-spacing:0">m2</div>
<div class="dc" style="left:259px;top:79px;width:81px;background:#f5fafe">千米</div>
<div class="dc" style="left:96px;top:99px;width:82px;background:#fff">组</div>
<div class="dc" style="left:178px;top:99px;width:81px;background:#fff">平方米</div>
<div class="dc" style="left:259px;top:99px;width:81px;background:#fff">公里</div>
<div class="dc" style="left:96px;top:119px;width:82px;background:#f5fafe">系统</div>
<div class="dc" style="left:178px;top:119px;width:81px;background:#f5fafe;letter-spacing:0">m³</div>
<div class="dc" style="left:259px;top:119px;width:81px;background:#f5fafe"></div>
<div class="dc" style="left:96px;top:139px;width:82px;background:#fff">丛</div>
<div class="dc" style="left:178px;top:139px;width:81px;background:#fff">立方米</div>
<div class="dc" style="left:259px;top:139px;width:81px;background:#fff"></div>
<div class="dc" style="left:96px;top:159px;width:82px;background:#f5fafe">对</div>
<div class="dc" style="left:178px;top:159px;width:81px;background:#f5fafe;letter-spacing:0">kg</div>
<div class="dc" style="left:259px;top:159px;width:81px;background:#f5fafe"></div>
<div class="dc" style="left:96px;top:179px;width:82px;background:#fff">份</div>
<div class="dc" style="left:178px;top:179px;width:81px;background:#fff">千克</div>
<div class="dc" style="left:259px;top:179px;width:81px;background:#fff"></div>
<div class="dc" style="left:96px;top:199px;width:82px;background:#f5fafe">缸</div>
<div class="dc" style="left:178px;top:199px;width:81px;background:#f5fafe">公斤</div>
<div class="dc" style="left:259px;top:199px;width:81px;background:#f5fafe"></div>
<div class="dc" style="left:96px;top:219px;width:82px;background:#fff">块</div>
<div class="dc" style="left:178px;top:219px;width:81px;background:#fff;letter-spacing:0">m3</div>
<div class="dc" style="left:259px;top:219px;width:81px;background:#fff"></div>
<div class="dc" style="left:96px;top:239px;width:82px;background:#f5fafe">榀</div>
<div class="dc" style="left:178px;top:239px;width:81px;background:#f5fafe"></div>
<div class="dc" style="left:259px;top:239px;width:81px;background:#f5fafe"></div>
<div class="dc" style="left:96px;top:259px;width:82px;background:#fff">台</div>
<div class="dc" style="left:178px;top:259px;width:81px;background:#fff"></div>
<div class="dc" style="left:259px;top:259px;width:81px;background:#fff"></div>
<div class="dc" style="left:96px;top:279px;width:82px;background:#f5fafe">樘</div>
<div class="dc" style="left:178px;top:279px;width:81px;background:#f5fafe"></div>
<div class="dc" style="left:259px;top:279px;width:81px;background:#f5fafe"></div>
<div class="dc" style="left:96px;top:299px;width:82px;background:#fff">套</div>
<div class="dc" style="left:178px;top:299px;width:81px;background:#fff"></div>
<div class="dc" style="left:259px;top:299px;width:81px;background:#fff"></div>
<div class="dc" style="left:96px;top:319px;width:82px;background:#f5fafe">攒</div>
<div class="dc" style="left:178px;top:319px;width:81px;background:#f5fafe"></div>
<div class="dc" style="left:259px;top:319px;width:81px;background:#f5fafe"></div>
<div class="dc" style="left:96px;top:339px;width:82px;background:#fff">支</div>
<div class="dc" style="left:178px;top:339px;width:81px;background:#fff"></div>
<div class="dc" style="left:259px;top:339px;width:81px;background:#fff"></div>
<div class="dc" style="left:96px;top:359px;width:82px;background:#f5fafe">只</div>
<div class="dc" style="left:178px;top:359px;width:81px;background:#f5fafe"></div>
<div class="dc" style="left:259px;top:359px;width:81px;background:#f5fafe"></div>
    <div class="abs" style="left:95px;top:19px;width:1px;height:360px;background:#000"></div>
    <div class="abs" style="left:95px;top:18px;width:84px;height:23px;border:2px solid #1c5fae"></div>
    <div class="abs" style="left:176px;top:38px;width:6px;height:6px;background:#1c5fae;border:1px solid #fff;box-sizing:content-box;margin:-1px"></div>
    <!-- scrollbar -->
    <div class="abs" style="left:430px;top:0;width:17px;height:376px;background:#f0f0f0"></div>
    <svg class="abs" style="left:433px;top:5px" width="10" height="7" viewBox="0 0 10 7"><path d="M1 6l4-4 4 4" fill="none" stroke="#505050" stroke-width="1.700"/></svg>
    <div class="abs" style="left:430px;top:17px;width:15px;height:17px;background:#cdcdcd"></div>
    <svg class="abs" style="left:433px;top:364px" width="10" height="7" viewBox="0 0 10 7"><path d="M1 1l4 4 4-4" fill="none" stroke="#505050" stroke-width="1.700"/></svg>
  </div>
  <div class="cb" style="left:462px;top:97px;border-color:#bcbcbc"></div>
  <div class="abs" style="left:478px;top:96px;font-size:13px;letter-spacing:-1px;line-height:16px;color:#9d9d9d;white-space:nowrap">应用清单单位规则</div>
  <div class="cb" style="left:462px;top:138px"></div>
  <div class="abs" style="left:478px;top:137px;font-size:13px;letter-spacing:-1px;line-height:16px;white-space:nowrap">允许修改系统默认值</div>
  <svg class="abs" style="left:473px;top:183px" width="14" height="10" viewBox="0 0 14 10"><path d="M3 4.500c2-3 6-3.500 8-1s0 5-2 5" fill="none" stroke="#1f3f8f" stroke-width="1.300"/><path d="M1 1v5h5" fill="none" stroke="#1f3f8f" stroke-width="1.500"/></svg>
  <div class="abs" style="left:495px;top:180px;font-size:13px;letter-spacing:-1px;line-height:16px;white-space:nowrap">恢复缺省设置</div>
  <div class="red" style="top:427px">*未配置的单位，默认<span style="letter-spacing:0">3</span>位小数规则</div>
  <div class="red" style="top:449px">该功能针对所有单位工程清单及措施表格应用小数规则</div>
  <div class="red" style="top:472px">应用小数规则后，原清单工程量不能保留，请备份后执行</div>
  <div class="btn" style="left:400px;width:84px;border:2px solid #0078d7;line-height:27px"><svg class="abs" style="left:18px;top:6px" width="17" height="15" viewBox="0 0 17 15"><path d="M2 9l4.500 4.500L16 2" fill="none" stroke="#0a3a5a" stroke-width="3"/><path d="M1.500 8.500l4.500 4.500L15.500 1.500" fill="none" stroke="#16a516" stroke-width="2.800"/></svg><span class="abs" style="left:39px">确认</span></div>
  <div class="btn" style="left:500px;width:84px"><svg class="abs" style="left:21px;top:9px" width="14" height="14" viewBox="0 0 14 14"><path d="M1.500 1.500l11 11M12.500 1.500l-11 11" stroke="#c01313" stroke-width="3.200"/></svg><span class="abs" style="left:40px">取消</span></div>
</div>

</div>
</body>
</html>
